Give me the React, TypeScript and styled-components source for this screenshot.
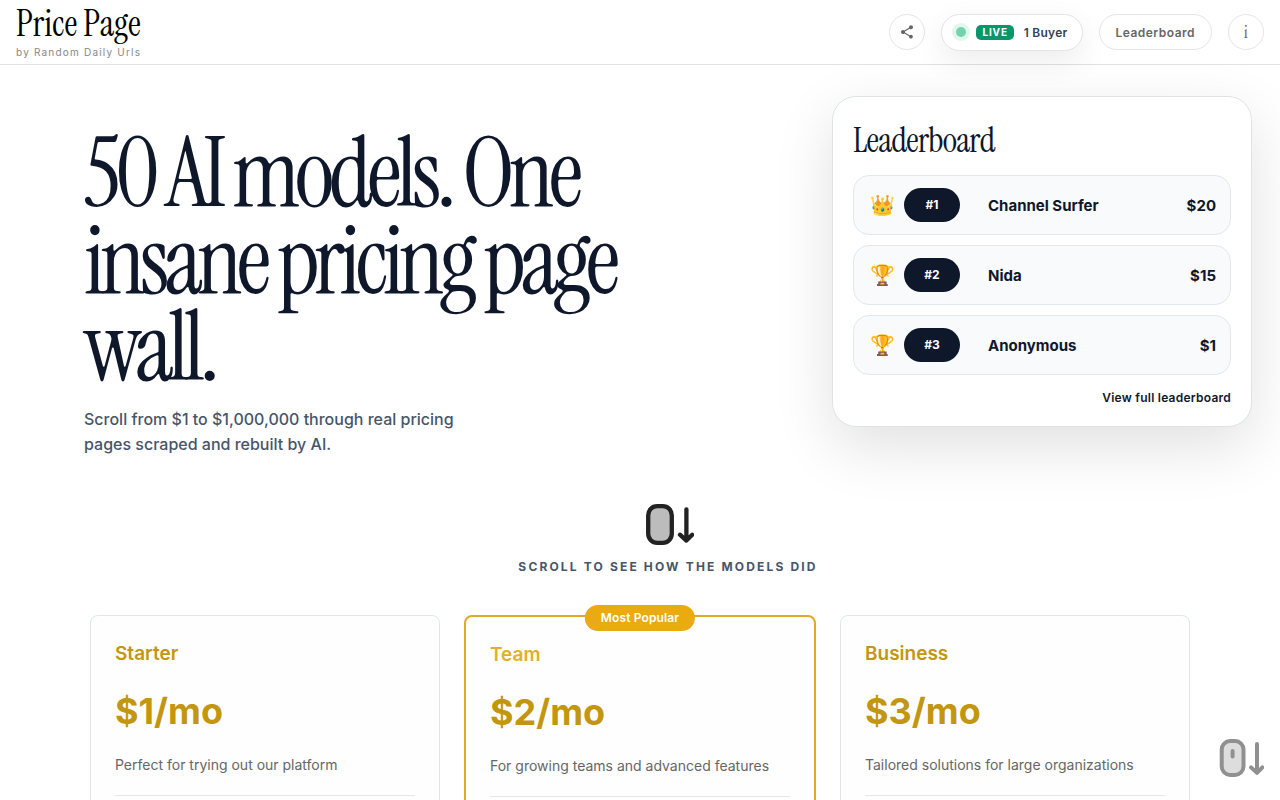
import React from "react";
import styled, { createGlobalStyle } from "styled-components";

const serif = `"Instrument Serif", "Liberation Serif", serif`;
const sans = `Inter, "Liberation Sans", sans-serif`;

const GlobalStyle = createGlobalStyle`
  *, *::before, *::after { box-sizing: border-box; }
  body { margin: 0; background: #fff; color: #0f172a; font-family: ${sans}; }
  h1, h2, h3, p, ol { margin: 0; padding: 0; }
  ol { list-style: none; }
  button { font-family: inherit; cursor: pointer; }
`;

const Header = styled.header`
  display: flex;
  align-items: center;
  justify-content: space-between;
  height: 65px;
  padding: 0 16px;
  border-bottom: 1px solid #e2e2e2;
`;

const Brand = styled.div`
  display: flex;
  flex-direction: column;
`;

const BrandName = styled.a`
  font: 400 36px/40px ${serif};
  color: #000;
  text-decoration: none;
`;

const Byline = styled.span`
  font-size: 10px;
  line-height: 16px;
  letter-spacing: 0.12em;
  color: #888;
`;

const Actions = styled.nav`
  display: flex;
  align-items: center;
  gap: 16px;
`;

const PillButton = styled.button<{ $round?: boolean }>`
  display: flex;
  align-items: center;
  justify-content: center;
  height: 36px;
  width: ${(p) => (p.$round ? "36px" : "auto")};
  padding: ${(p) => (p.$round ? "0" : "0 16px")};
  border: 1px solid #e5e5e5;
  border-radius: 18px;
  background: #fff;
  color: #666;
  font-size: 12px;
  font-weight: 600;
  letter-spacing: 0.04em;
`;

const InfoGlyph = styled.span`
  font: 400 18px/20px ${serif};
`;

const LivePill = styled.div`
  display: flex;
  align-items: center;
  gap: 10px;
  height: 37px;
  padding: 0 14px;
  border: 1px solid #e2e4e8;
  border-radius: 19px;
  background: #fff;
  box-shadow: 0 10px 30px rgba(0, 0, 0, 0.08);
`;

const LiveDot = styled.span`
  width: 10px;
  height: 10px;
  border-radius: 50%;
  background: #74d3ae;
  box-shadow: 0 0 0 4px #e2f7ee;
`;

const LiveBadge = styled.span`
  padding: 0 6px 0 7px;
  border-radius: 5px;
  background: #059669;
  color: #fff;
  font-size: 10px;
  font-weight: 700;
  line-height: 15px;
  letter-spacing: 0.08em;
`;

const BuyerCount = styled.span`
  font-size: 12px;
  font-weight: 600;
  letter-spacing: 0.02em;
  color: #334155;
`;

const Hero = styled.section`
  padding: 31px 28px 0 84px;
`;

const HeroTop = styled.div`
  display: flex;
  align-items: flex-start;
  justify-content: space-between;
  gap: 40px;
`;

const Intro = styled.div`
  max-width: 600px;
  padding-top: 34px;
`;

const Headline = styled.h1`
  font: 400 96px/87px ${serif};
  letter-spacing: -0.055em;
`;

const Lead = styled.p`
  max-width: 400px;
  margin-top: 16px;
  font-size: 16px;
  font-weight: 500;
  line-height: 25px;
  color: #475569;
`;

const Board = styled.section`
  flex: 0 0 420px;
  display: flex;
  flex-direction: column;
  padding: 20px;
  border: 1px solid #dfe3e6;
  border-radius: 24px;
  background: #fff;
  box-shadow: 0 20px 60px rgba(0, 0, 0, 0.12);
`;

const BoardTitle = styled.h2`
  font: 400 35px/46px ${serif};
  letter-spacing: -0.025em;
`;

const BoardList = styled.ol`
  display: flex;
  flex-direction: column;
  gap: 10px;
  margin-top: 12px;
`;

const BoardRow = styled.li`
  display: grid;
  grid-template-columns: 28px 56px 1fr auto;
  align-items: center;
  column-gap: 8px;
  height: 60px;
  padding: 0 14px;
  border: 1px solid #e2e8f0;
  border-radius: 16px;
  background: #f8fafc;
  font-size: 15px;
  font-weight: 700;
`;

const Medal = styled.span`
  padding-left: 2px;
  font-family: "Noto Color Emoji", sans-serif;
  font-size: 20px;
  font-weight: 400;
  line-height: 24px;
  text-align: center;
`;

const Rank = styled.span`
  border-radius: 17px;
  background: #0f172a;
  color: #fff;
  font-size: 12px;
  line-height: 34px;
  text-align: center;
`;

const BuyerName = styled.span`
  padding-left: 20px;
`;

const BoardLink = styled.a`
  align-self: flex-end;
  margin-top: 15px;
  font-size: 12px;
  font-weight: 600;
  line-height: 16px;
  letter-spacing: 0.02em;
  color: #0f172a;
  text-decoration: none;
`;

const ScrollCue = styled.div`
  display: flex;
  flex-direction: column;
  align-items: center;
  gap: 12px;
  padding: 47px 0 38px;
`;

const CueText = styled.p`
  font-size: 12px;
  font-weight: 700;
  line-height: 20px;
  letter-spacing: 0.18em;
  text-transform: uppercase;
  color: #475569;
`;

const FloatingCue = styled.div`
  position: fixed;
  right: 16px;
  bottom: 23px;
  display: flex;
  opacity: 0.5;
`;

const Plans = styled.section`
  display: flex;
  gap: 24px;
  max-width: 1100px;
  margin: 0 auto;
`;

const Plan = styled.article<{ $featured?: boolean }>`
  position: relative;
  flex: 1 1 0;
  min-height: 320px;
  padding: 24px;
  border: ${(p) => (p.$featured ? "2px solid #e0aa26" : "1px solid #e2e6e6")};
  border-radius: 8px;
  background: #fefefe;
`;

const PlanTag = styled.span`
  position: absolute;
  top: -12px;
  left: 50%;
  transform: translateX(-50%);
  padding: 0 16px;
  border-radius: 13px;
  background: #eaab10;
  color: #fff;
  font-size: 12px;
  font-weight: 600;
  line-height: 26px;
  letter-spacing: 0.01em;
  white-space: nowrap;
`;

const PlanName = styled.h3<{ $featured?: boolean }>`
  font-size: 19px;
  font-weight: 600;
  line-height: 28px;
  color: ${(p) => (p.$featured ? "#e3ae2a" : "#c3960f")};
`;

const PlanPrice = styled.p`
  margin-top: 16px;
  font-size: 36px;
  font-weight: 700;
  line-height: 54px;
  color: #c3960f;
`;

const PlanText = styled.p`
  margin-top: 16px;
  padding-bottom: 19px;
  border-bottom: 1px solid #e4e7e7;
  font-size: 14px;
  line-height: 22px;
  color: #666;
`;

function ShareIcon() {
  return (
    <svg width="16" height="16" viewBox="0 0 24 24" fill="currentColor" aria-hidden="true">
      <path d="M18 16.1c-.8 0-1.4.3-2 .8l-7.100-4.200c.1-.2.100-.4.100-.7s0-.5-.1-.7L16 7.200c.5.500 1.200.8 2 .8 1.700 0 3-1.300 3-3s-1.300-3-3-3-3 1.300-3 3c0 .2 0 .5.100.7L8 9.800C7.500 9.300 6.800 9 6 9c-1.700 0-3 1.300-3 3s1.300 3 3 3c.8 0 1.500-.3 2-.8l7.100 4.200c0 .2-.1.400-.1.600 0 1.600 1.300 2.900 2.900 2.900s2.900-1.300 2.900-2.900-1.200-2.900-2.800-2.900z" />
    </svg>
  );
}

function MouseIcon({ width, height, wheel }: { width: number; height: number; wheel?: boolean }) {
  return (
    <svg
      width={width}
      height={height}
      viewBox="-4 0 52 41"
      fill="none"
      stroke="#222"
      strokeWidth="4.3"
      strokeLinecap="round"
      strokeLinejoin="round"
      aria-hidden="true"
    >
      <rect x="2.200" y="2.200" width="23.600" height="36.600" rx="9" fill="#bcbcbc" />
      {wheel && <path d="M14 13v6" />}
      <path d="M40.400 5.300V36.500M34 30.700l6.400 5.900 5.800-5.900" />
    </svg>
  );
}

const buyers = [
  { medal: "👑", name: "Channel Surfer", amount: "$20" },
  { medal: "🏆", name: "Nida", amount: "$15" },
  { medal: "🏆", name: "Anonymous", amount: "$1" },
];

const plans = [
  { name: "Starter", price: "$1/mo", text: "Perfect for trying out our platform" },
  { name: "Team", price: "$2/mo", text: "For growing teams and advanced features", featured: true },
  { name: "Business", price: "$3/mo", text: "Tailored solutions for large organizations" },
];

export default function App() {
  return (
    <>
      <GlobalStyle />
      <Header>
        <Brand>
          <BrandName href="#">Price Page</BrandName>
          <Byline>by Random Daily Urls</Byline>
        </Brand>
        <Actions>
          <PillButton $round aria-label="Share">
            <ShareIcon />
          </PillButton>
          <LivePill>
            <LiveDot />
            <LiveBadge>LIVE</LiveBadge>
            <BuyerCount>1 Buyer</BuyerCount>
          </LivePill>
          <PillButton>Leaderboard</PillButton>
          <PillButton $round>
            <InfoGlyph>i</InfoGlyph>
          </PillButton>
        </Actions>
      </Header>
      <main>
        <Hero>
          <HeroTop>
            <Intro>
              <Headline>50 AI models. One insane pricing page wall.</Headline>
              <Lead>Scroll from $1 to $1,000,000 through real pricing pages scraped and rebuilt by AI.</Lead>
            </Intro>
            <Board>
              <BoardTitle>Leaderboard</BoardTitle>
              <BoardList>
                {buyers.map((b, i) => (
                  <BoardRow key={b.name}>
                    <Medal>{b.medal}</Medal>
                    <Rank>{`#${i + 1}`}</Rank>
                    <BuyerName>{b.name}</BuyerName>
                    <span>{b.amount}</span>
                  </BoardRow>
                ))}
              </BoardList>
              <BoardLink href="#leaderboard">View full leaderboard</BoardLink>
            </Board>
          </HeroTop>
          <ScrollCue>
            <MouseIcon width={52} height={41} />
            <CueText>Scroll to see how the models did</CueText>
          </ScrollCue>
        </Hero>
        <Plans>
          {plans.map((p) => (
            <Plan key={p.name} $featured={p.featured}>
              {p.featured && <PlanTag>Most Popular</PlanTag>}
              <PlanName $featured={p.featured}>{p.name}</PlanName>
              <PlanPrice>{p.price}</PlanPrice>
              <PlanText>{p.text}</PlanText>
            </Plan>
          ))}
        </Plans>
      </main>
      <FloatingCue>
        <MouseIcon width={48} height={38} wheel />
      </FloatingCue>
    </>
  );
}
